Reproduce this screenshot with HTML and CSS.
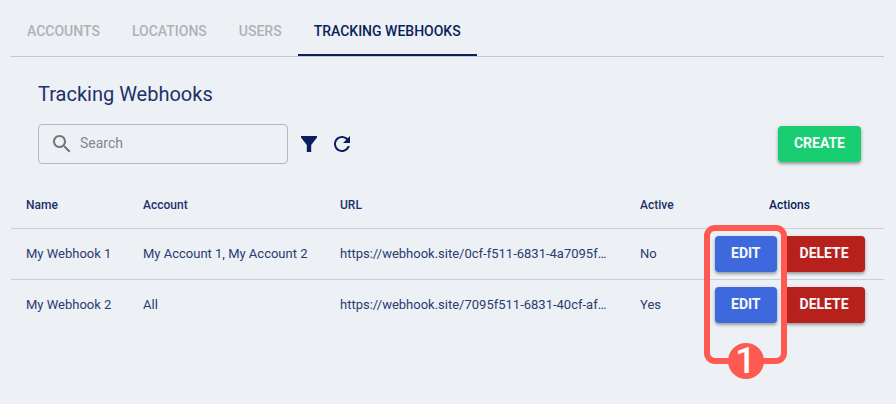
FILE: index.html
```html
<!DOCTYPE html>
<html lang="en">
<head>
<meta charset="utf-8">
<meta name="viewport" content="width=device-width, initial-scale=1">
<title>Tracking Webhooks</title>
<link rel="stylesheet" href="styles.css">
</head>
<body>
<nav class="tabs">
  <a class="tab" href="#accounts">ACCOUNTS</a>
  <a class="tab" href="#locations">LOCATIONS</a>
  <a class="tab" href="#users">USERS</a>
  <a class="tab tab-active" href="#webhooks" aria-current="page">TRACKING WEBHOOKS</a>
</nav>
<main>
  <header class="panel-head">
    <h1>Tracking Webhooks</h1>
    <div class="toolbar">
      <label class="search">
        <svg class="icon" viewBox="0 0 24 24" aria-hidden="true"><path d="M15.5 14h-.79l-.28-.27C15.41 12.59 16 11.11 16 9.5 16 5.91 13.09 3 9.5 3S3 5.91 3 9.5 5.91 16 9.5 16c1.61 0 3.09-.59 4.23-1.57l.27.28v.79l5 4.99L20.49 19l-4.99-5zm-6 0C7.01 14 5 11.99 5 9.5S7.01 5 9.5 5 14 7.01 14 9.5 11.99 14 9.5 14z"/></svg>
        <input type="search" placeholder="Search" aria-label="Search">
      </label>
      <button class="icon-button" type="button" aria-label="Filter">
        <svg class="icon" viewBox="0 0 24 24" aria-hidden="true"><path d="M4 4h16v1.6L14.2 13v7H9.8v-7L4 5.600z"/></svg>
      </button>
      <button class="icon-button" type="button" aria-label="Refresh">
        <svg class="icon" viewBox="0 0 24 24" aria-hidden="true"><path d="M17.65 6.350C16.2 4.900 14.210 4 12 4c-4.420 0-7.990 3.580-7.990 8s3.570 8 7.990 8c3.730 0 6.840-2.550 7.730-6h-2.080c-.82 2.330-3.040 4-5.650 4-3.310 0-6-2.690-6-6s2.690-6 6-6c1.660 0 3.140.69 4.220 1.780L13 11h7V4l-2.350 2.350z"/></svg>
      </button>
      <button class="button create" type="button">CREATE</button>
    </div>
  </header>
  <div class="table-wrap">
    <table>
      <colgroup>
        <col class="col-name"><col class="col-account"><col><col class="col-active"><col class="col-actions">
      </colgroup>
      <thead>
        <tr>
          <th scope="col">Name</th>
          <th scope="col">Account</th>
          <th scope="col">URL</th>
          <th scope="col">Active</th>
          <th scope="col" class="actions-head">Actions</th>
        </tr>
      </thead>
      <tbody>
        <tr>
          <td>My Webhook 1</td>
          <td>My Account 1, My Account 2</td>
          <td>https://webhook.site/0cf-f511-6831-4a7095f…</td>
          <td>No</td>
          <td><div class="actions"><button class="button edit" type="button">EDIT</button><button class="button delete" type="button">DELETE</button></div></td>
        </tr>
        <tr>
          <td>My Webhook 2</td>
          <td>All</td>
          <td>https://webhook.site/7095f511-6831-40cf-af…</td>
          <td>Yes</td>
          <td><div class="actions"><button class="button edit" type="button">EDIT</button><button class="button delete" type="button">DELETE</button></div></td>
        </tr>
      </tbody>
    </table>
    <div class="callout"><span class="callout-number">1</span></div>
  </div>
</main>
</body>
</html>
```
FILE: styles.css
```css
* {
  box-sizing: border-box;
}

body {
  min-height: 100vh;
  margin: 0;
  padding: 7px 12px 0 11px;
  background: #edf1f6;
  color: #0a1f5c;
  font-family: Roboto, "Liberation Sans", sans-serif;
  font-size: 13px;
}

button,
input {
  font: inherit;
}

.tabs {
  display: flex;
  height: 50px;
  border-bottom: 1px solid #c3c7d0;
}

.tab {
  padding: 0 16px;
  border-bottom: 2px solid transparent;
  color: #b0b1b4;
  font-size: 14px;
  font-weight: 500;
  line-height: 48px;
  text-decoration: none;
}

.tab-active {
  border-color: #0a1f5c;
  color: #0a1f5c;
}

.panel-head {
  padding: 23px 23px 0 27px;
}

h1 {
  margin: 0;
  color: #1d3069;
  font-size: 20px;
  font-weight: 400;
  line-height: 28px;
}

.toolbar {
  display: flex;
  align-items: center;
  padding-top: 16px;
}

.icon {
  flex: none;
  display: block;
  width: 24px;
  height: 24px;
  fill: currentColor;
}

.search {
  display: flex;
  align-items: center;
  gap: 6px;
  width: 250px;
  height: 40px;
  margin-right: 9px;
  padding: 0 11px;
  border: 1px solid #b3b8c0;
  border-radius: 4px;
  color: #757575;
}

.search input {
  flex: 1;
  min-width: 0;
  padding: 0 0 2px;
  border: 0;
  outline: 0;
  background: none;
  color: #0a1f5c;
  font-size: 14px;
}

.search input::placeholder {
  color: #85888e;
  opacity: 1;
}

.icon-button {
  margin-right: 9px;
  padding: 0;
  border: 0;
  background: none;
  color: #0a1f5c;
}

.button {
  height: 36px;
  padding: 0 16px 2px;
  border: 0;
  border-radius: 4px;
  box-shadow: 0 2px 3px rgba(0, 0, 0, 0.3), 0 1px 5px rgba(0, 0, 0, 0.1);
  color: #f6f8fc;
  font-size: 14px;
  font-weight: 700;
}

.create {
  margin-left: auto;
  background: #19ce70;
}

.edit {
  background: #3d69dc;
}

.delete {
  background: #b7211b;
}

.table-wrap {
  position: relative;
  padding: 17px 0 72px;
}

table {
  width: 100%;
  border-collapse: collapse;
  table-layout: fixed;
}

.col-name {
  width: 117px;
}

.col-account {
  width: 197px;
}

.col-active {
  width: 75px;
}

.col-actions {
  width: 184px;
}

th,
td {
  height: 51px;
  padding: 0 0 0 15px;
  border-bottom: 1px solid #cbd0d7;
  text-align: left;
  white-space: nowrap;
}

td {
  color: #2a3b70;
}

th {
  height: 47px;
  padding-top: 2px;
  color: #1d3069;
  font-size: 12px;
  font-weight: 500;
}

tbody tr:last-child td {
  border-bottom: 0;
}

th.actions-head {
  padding-right: 20px;
  color: #0a1f5c;
  text-align: center;
}

.actions {
  display: flex;
  gap: 7px;
}

/* Numbered highlight around the edit buttons */
.callout {
  position: absolute;
  top: 61px;
  right: 97px;
  display: flex;
  justify-content: center;
  align-items: flex-end;
  width: 83px;
  height: 139px;
  border: 6px solid #ff5a52;
  border-radius: 11px;
  pointer-events: none;
}

.callout-number {
  flex: none;
  width: 36px;
  height: 36px;
  margin-bottom: -21px;
  border-radius: 50%;
  background: #ff5a52;
  color: #fff;
  font-size: 36px;
  font-weight: 500;
  line-height: 36px;
  text-align: center;
}
```
